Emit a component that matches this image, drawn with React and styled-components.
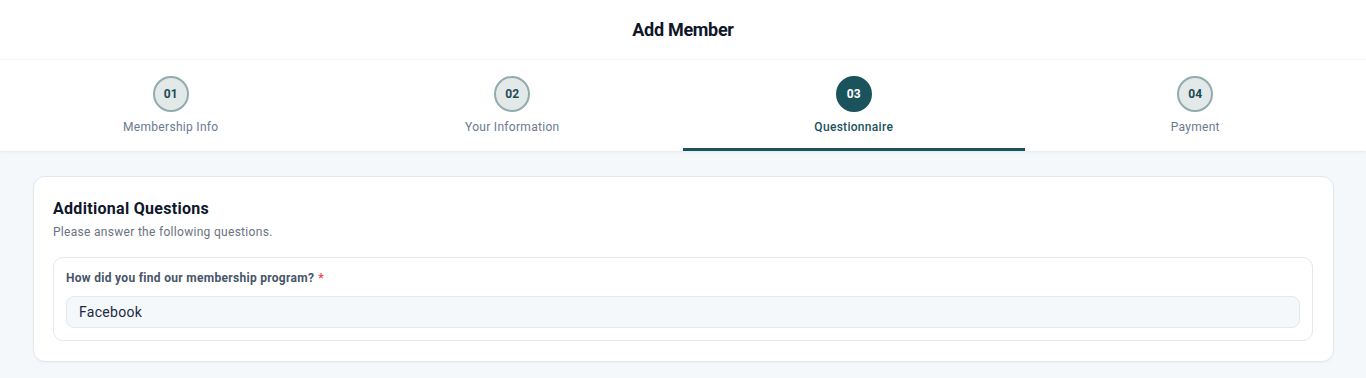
import React from "react";
import styled, { createGlobalStyle } from "styled-components";

const GlobalStyle = createGlobalStyle`
  body {
    margin: 0;
    font-family: Roboto, "Liberation Sans", Arial, sans-serif;
    background: #f5f8fb;
    color: #0f172a;
    letter-spacing: 0.3px;
  }
`;

const Header = styled.header`
  background: #fff;
  box-shadow: 0 1px 3px rgba(15, 23, 42, 0.08);
`;

const TitleBar = styled.div`
  height: 59px;
  display: flex;
  align-items: center;
  justify-content: center;
  border-bottom: 1px solid #f3f5f7;
`;

const Title = styled.h1`
  margin: 0;
  font-size: 18px;
  font-weight: 700;
  letter-spacing: -0.3px;
  color: #0f172a;
`;

const Steps = styled.nav`
  display: grid;
  grid-template-columns: repeat(4, 1fr);
`;

const Step = styled.div`
  display: flex;
  flex-direction: column;
  align-items: center;
  padding-top: 16px;
  height: 91px;
  box-sizing: border-box;
  border-bottom: 3px solid ${(p) => (p.$active ? "#1b535c" : "transparent")};
`;

const Circle = styled.div`
  width: 36px;
  height: 36px;
  box-sizing: border-box;
  border-radius: 50%;
  display: flex;
  align-items: center;
  justify-content: center;
  font-size: 12px;
  font-weight: 700;
  letter-spacing: 0.2px;
  background: ${(p) => (p.$active ? "#1b535c" : "#e3e8e9")};
  color: ${(p) => (p.$active ? "#fff" : "#1b4a55")};
  border: 2px solid ${(p) => (p.$active ? "#1b535c" : "#92abae")};
`;

const StepLabel = styled.div`
  margin-top: 8px;
  font-size: 12px;
  font-weight: ${(p) => (p.$active ? 500 : 400)};
  color: ${(p) => (p.$active ? "#1b535c" : "#6b7a8f")};
`;

const Main = styled.main`
  padding: 25px 32px 16px 33px;
`;

const Card = styled.section`
  background: #fff;
  border: 1px solid #e2e8f0;
  border-radius: 12px;
  padding: 21px 20px 20px 19px;
  box-shadow: 0 1px 2px rgba(15, 23, 42, 0.04);
`;

const CardTitle = styled.h2`
  margin: 0;
  font-size: 16px;
  font-weight: 700;
  line-height: 22px;
  color: #0f172a;
`;

const CardSub = styled.p`
  margin: 3px 0 0;
  font-size: 12px;
  line-height: 18px;
  color: #6b7280;
`;

const Question = styled.div`
  margin-top: 16px;
  border: 1px solid #e2e8f0;
  border-radius: 10px;
  padding: 12px 12px 12px;
`;

const Label = styled.label`
  display: block;
  font-size: 12px;
  font-weight: 700;
  color: #475569;
  line-height: 16px;
`;

const Required = styled.span`
  color: #ef4444;
  margin-left: 4px;
`;

const Input = styled.div`
  margin-top: 10px;
  height: 32px;
  box-sizing: border-box;
  border: 1px solid #e2e8f0;
  border-radius: 8px;
  background: #f4f8fb;
  padding: 0 12px;
  display: flex;
  align-items: center;
  font-size: 14px;
  color: #1e293b;
`;

const steps = [
  { n: "01", label: "Membership Info" },
  { n: "02", label: "Your Information" },
  { n: "03", label: "Questionnaire", active: true },
  { n: "04", label: "Payment" },
];

export default function App() {
  return (
    <>
      <GlobalStyle />
      <Header>
        <TitleBar>
          <Title>Add Member</Title>
        </TitleBar>
        <Steps>
          {steps.map((s) => (
            <Step key={s.n} $active={s.active}>
              <Circle $active={s.active}>{s.n}</Circle>
              <StepLabel $active={s.active}>{s.label}</StepLabel>
            </Step>
          ))}
        </Steps>
      </Header>
      <Main>
        <Card>
          <CardTitle>Additional Questions</CardTitle>
          <CardSub>Please answer the following questions.</CardSub>
          <Question>
            <Label>
              How did you find our membership program?<Required>*</Required>
            </Label>
            <Input>Facebook</Input>
          </Question>
        </Card>
      </Main>
    </>
  );
}
